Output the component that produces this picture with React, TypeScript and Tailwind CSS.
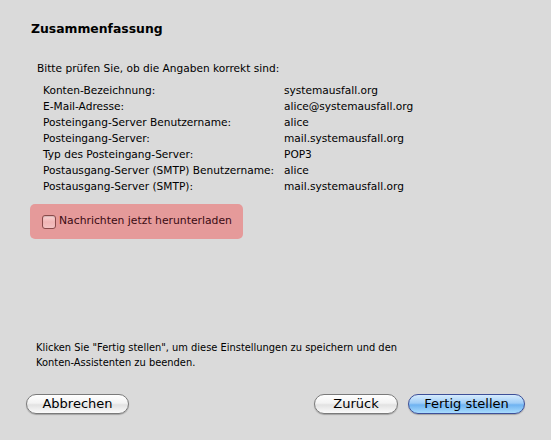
import React from "react";

const rows: [string, string][] = [
  ["Konten-Bezeichnung:", "systemausfall.org"],
  ["E-Mail-Adresse:", "alice@systemausfall.org"],
  ["Posteingang-Server Benutzername:", "alice"],
  ["Posteingang-Server:", "mail.systemausfall.org"],
  ["Typ des Posteingang-Server:", "POP3"],
  ["Postausgang-Server (SMTP) Benutzername:", "alice"],
  ["Postausgang-Server (SMTP):", "mail.systemausfall.org"],
];

function AquaButton({ label, primary, className }: { label: string; primary?: boolean; className?: string }) {
  return (
    <button
      className={
        "h-[20px] rounded-full border text-[13px] leading-[18px] text-black shadow-[0_1px_1px_rgba(0,0,0,0.25)] " +
        (primary
          ? "border-[#3d4f98] bg-[linear-gradient(to_bottom,#d6ebfd_0%,#9fcdf7_45%,#6fb3f1_55%,#a9dcfd_100%)] "
          : "border-[#7a7a7a] bg-[linear-gradient(to_bottom,#ffffff_0%,#f3f3f3_45%,#e2e2e2_55%,#fbfbfb_100%)] ") +
        (className ?? "")
      }
    >
      {label}
    </button>
  );
}

export default function App() {
  return (
    <div
      className="flex h-[440px] w-[551px] flex-col bg-[#dadada] text-[10.6px] text-black"
      style={{ fontFamily: '"DejaVu Sans", "Liberation Sans", sans-serif' }}
    >
      <h1 className="ml-[31px] mt-[21px] text-[12.4px] font-bold leading-[16px]">Zusammenfassung</h1>

      <p className="ml-[37px] mt-[23px] leading-[16px]">Bitte prüfen Sie, ob die Angaben korrekt sind:</p>

      <div className="ml-[43px] mt-[6px] grid grid-cols-[241px_1fr] leading-[16px]">
        {rows.map(([k, v]) => (
          <React.Fragment key={k}>
            <span className="whitespace-nowrap">{k}</span>
            <span>{v}</span>
          </React.Fragment>
        ))}
      </div>

      <div className="ml-[30px] mt-[10px] flex h-[35px] w-[213px] items-center rounded-[5px] bg-[#e59a9a] pl-[12px]">
        <span className="h-[14px] w-[14px] shrink-0 rounded-[3px] border border-[#8a4a4a] bg-[linear-gradient(to_bottom,#fbd6d6,#f0b4b4_50%,#f3c2c2)] shadow-[inset_0_1px_1px_rgba(0,0,0,0.15)]" />
        <span className="ml-[3px] whitespace-nowrap text-[10.8px] text-[#3a0a12]">Nachrichten jetzt herunterladen</span>
      </div>

      <p className="ml-[36px] mt-[101px] w-[400px] text-[9.9px] leading-[15px]">
        Klicken Sie "Fertig stellen", um diese Einstellungen zu speichern und den Konten-Assistenten zu beenden.
      </p>

      <div className="mt-[24px] flex px-[26px]">
        <AquaButton label="Abbrechen" className="w-[103px]" />
        <AquaButton label="Zurück" className="ml-auto w-[84px]" />
        <AquaButton label="Fertig stellen" primary className="ml-[10px] w-[117px]" />
      </div>
    </div>
  );
}
